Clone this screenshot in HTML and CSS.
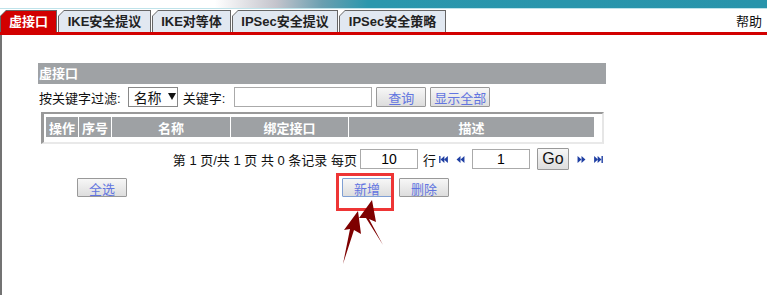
FILE: index.html
```html
<!DOCTYPE html>
<html lang="zh-CN">
<head>
  <meta charset="UTF-8">
  <title>虚接口</title>
  <meta name="viewport" content="width=device-width, initial-scale=1.0">
  <link rel="stylesheet" href="styles.css">
</head>
<body>
  <div class="banner"></div>

  <nav class="tabbar">
    <a class="tab active t1" href="#"><span>虚接口</span></a>
    <a class="tab t2" href="#"><span>IKE安全提议</span></a>
    <a class="tab t3" href="#"><span>IKE对等体</span></a>
    <a class="tab t4" href="#"><span>IPSec安全提议</span></a>
    <a class="tab t5" href="#"><span>IPSec安全策略</span></a>
    <a class="help" href="#">帮助</a>
  </nav>

  <main class="page">
    <section class="panel">
      <div class="panel-title">虚接口</div>

      <div class="filter">
        <span>按关键字过滤:</span>
        <div class="select">名称<span class="caret"></span></div>
        <span>关键字:</span>
        <input class="field keyword" type="text">
        <button class="btn">查询</button>
        <button class="btn wide">显示全部</button>
      </div>

      <div class="grid">
        <table>
          <thead>
            <tr>
              <th class="c-op">操作</th>
              <th class="c-no">序号</th>
              <th class="c-name">名称</th>
              <th class="c-bind">绑定接口</th>
              <th>描述</th>
            </tr>
          </thead>
        </table>
      </div>

      <div class="pager">
        <span>第 1 页/共 1 页 共 0 条记录 每页</span>
        <input class="field num" type="text" value="10">
        <span class="row-label">行</span>
        <svg class="nav first" viewBox="0 0 10 8"><rect x="0" y="0" width="1.6" height="8"/><polygon points="6,0 6,8 1.6,4"/><polygon points="10,0 10,8 5.6,4"/></svg>
        <svg class="nav" viewBox="0 0 9 8"><polygon points="4.5,0 4.5,8 0,4"/><polygon points="9,0 9,8 4.5,4"/></svg>
        <input class="field num page-no" type="text" value="1">
        <button class="btn go">Go</button>
        <svg class="nav" viewBox="0 0 9 8"><polygon points="0,0 0,8 4.5,4"/><polygon points="4.5,0 4.5,8 9,4"/></svg>
        <svg class="nav last" viewBox="0 0 10 8"><polygon points="0,0 0,8 4.4,4"/><polygon points="4,0 4,8 8.4,4"/><rect x="8.4" y="0" width="1.6" height="8"/></svg>
      </div>

      <div class="actions">
        <button class="btn">全选</button>
        <button class="btn add">新增</button>
        <button class="btn">删除</button>
      </div>
    </section>
  </main>

  <!-- annotation drawn over the screenshot -->
  <div class="mark"></div>
  <svg class="arrows" viewBox="0 0 767 295">
    <polygon points="358,211 361,234 354,230 343,264 350,229 344,230"/>
    <polygon points="372,200 376,222 369,219 383,245 366,218 359,218"/>
  </svg>
</body>
</html>
```

FILE: styles.css
```css
* { box-sizing: border-box; margin: 0; padding: 0; }

body {
  font-family: "Liberation Sans", "Noto Sans CJK SC", sans-serif;
  font-size: 13px;
  color: #111;
  background: #fff;
  height: 295px;
  overflow: hidden;
  display: flex;
  flex-direction: column;
}

.banner {
  height: 9px;
  background: linear-gradient(to right, #fff 0%, #fff 28%, #c4c4cc 36%, #6a9fb0 42%, #2a97ad 48%, #2894ab 100%);
  border-bottom: 1px solid #bfe3ea;
}

.tabbar {
  display: flex;
  align-items: flex-end;
  gap: 1px;
  height: 26px;
  border-bottom: 3px solid #d20000;
}

.tab {
  display: block;
  height: 22px;
  padding: 1px 1px 0 1px;
  background: #666;
  clip-path: polygon(6px 0, 100% 0, 100% 100%, 0 100%, 0 6px);
  text-decoration: none;
}

.tab span {
  display: block;
  height: 21px;
  line-height: 21px;
  text-align: center;
  background: #e1e8f1;
  color: #222;
  font-weight: bold;
  font-size: 13px;
  clip-path: polygon(5px 0, 100% 0, 100% 100%, 0 100%, 0 5px);
}

.tab.active span {
  background: #d20000;
  color: #fff;
}

.t1 { width: 57px; }
.t2 { width: 93px; }
.t3 { width: 79px; }
.t4 { width: 106px; }
.t5 { width: 107px; }

.help {
  margin-left: auto;
  align-self: center;
  padding: 0 5px 0 0;
  color: #111;
  text-decoration: none;
  font-size: 13px;
}

.page {
  flex: 1;
  border-left: 2px solid #737373;
  padding: 28px 0 0 36px;
}

.panel { width: 568px; }

.panel-title {
  height: 21px;
  line-height: 21px;
  padding-left: 1px;
  background: #9fa2a5;
  color: #fff;
  font-weight: bold;
}

.filter {
  display: flex;
  align-items: center;
  height: 20px;
  margin-top: 3px;
  padding-left: 1px;
}

.select {
  display: flex;
  align-items: center;
  width: 50px;
  height: 20px;
  margin: 0 5px 0 7px;
  padding-left: 5px;
  border: 1px solid #888;
  font-size: 14px;
  white-space: nowrap;
}

.caret {
  width: 0;
  height: 0;
  margin: 0 0 2px 6px;
  border-left: 4px solid transparent;
  border-right: 4px solid transparent;
  border-top: 7px solid #111;
}

.field {
  height: 20px;
  border: 1px solid #aaa;
  background: #fff;
  font: 14px "Liberation Sans", sans-serif;
  text-align: center;
  outline: none;
}

.keyword { width: 138px; margin-left: 9px; }

.btn {
  height: 20px;
  width: 50px;
  border: 1px solid #999;
  border-radius: 1px;
  background: linear-gradient(#f7f7f7, #dddddd);
  color: #6275e0;
  font: 13px "Liberation Sans", "Noto Sans CJK SC", sans-serif;
}

.filter .btn { margin-left: 4px; }
.filter .btn.wide { width: 60px; }

.grid {
  margin: 5px 2px 0 3px;
  border-style: solid;
  border-width: 2px 2px 2px 3px;
  border-color: #999 #e6e6e6 #e9e9e9 #999;
  padding: 3px 8px 5px 2px;
}

table {
  width: 100%;
  border-collapse: separate;
  border-spacing: 0;
}

th {
  height: 20px;
  background: #9ea1a4;
  color: #fff;
  font-weight: bold;
  border-left: 1px solid #fff;
  text-align: center;
  padding: 0;
}

th.c-op { width: 32px; border-left: 0; }
th.c-no { width: 33px; }
th.c-name { width: 119px; }
th.c-bind { width: 118px; }

.pager {
  display: flex;
  align-items: center;
  justify-content: flex-end;
  height: 22px;
  margin-top: 4px;
  padding-right: 3px;
}

.pager .num { width: 58px; margin-left: 3px; }
.pager .page-no { margin-left: 7px; }
.row-label { margin-left: 5px; }

.nav {
  width: 9px;
  height: 7px;
  fill: #1f3fa3;
  margin-left: 8px;
}
.nav.first { margin-left: 3px; }

.btn.go {
  width: 32px;
  height: 22px;
  margin-left: 7px;
  color: #111;
  font-size: 16px;
  font-family: "Liberation Sans", sans-serif;
}

.actions {
  display: flex;
  margin-top: 8px;
  padding-left: 39px;
}

.actions .btn { height: 19px; }
.actions .add { margin-left: 215px; border-color: #7f9fd3; }
.actions .add + .btn { margin-left: 7px; }

.mark {
  position: absolute;
  left: 336px;
  top: 173px;
  width: 58px;
  height: 38px;
  border: 3px solid #ee3535;
}

.arrows {
  position: absolute;
  left: 0;
  top: 0;
  width: 767px;
  height: 295px;
  fill: #7e0000;
  pointer-events: none;
}
```
